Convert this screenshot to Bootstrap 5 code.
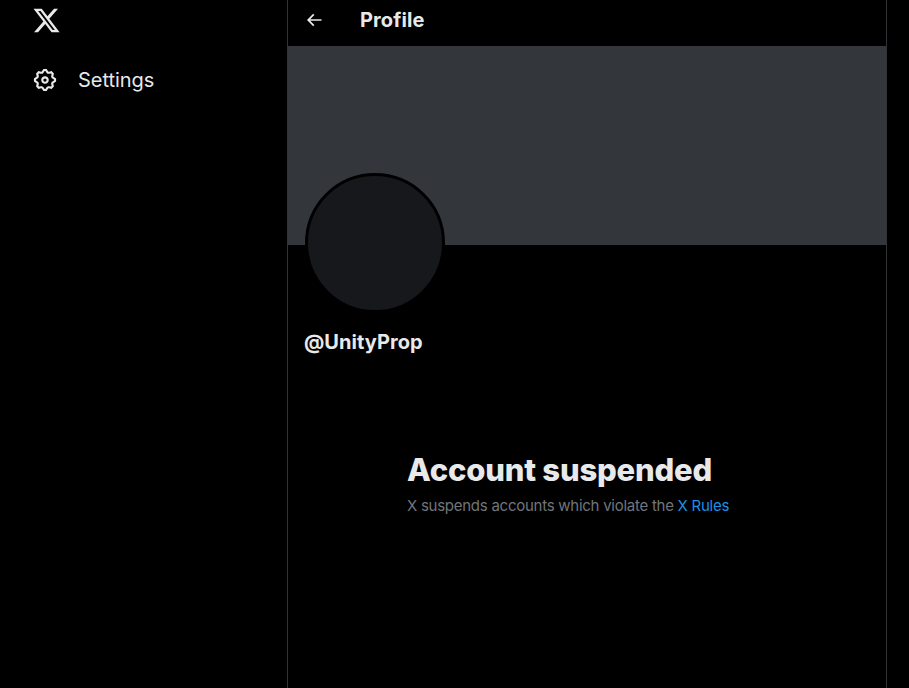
<!DOCTYPE html>
<html lang="en">
<head>
<meta charset="utf-8">
<title>Profile</title>
<link rel="stylesheet" href="https://cdn.jsdelivr.net/npm/bootstrap@5.3.0/dist/css/bootstrap.min.css">
<style>
html,body{height:100%;}
body{background:#000;color:#e7e9ea;font-family:"Inter","Liberation Sans",sans-serif;overflow:hidden;}
.shell{height:688px;}
.side{width:287px;flex:none;padding-left:32px;}
.logo-wrap{height:41px;padding-top:6px;}
.logo-svg{width:29px;height:29px;display:block;fill:#e7e9ea;}
.set-row{height:78px;gap:20px;}
.gear-svg{width:26px;height:26px;fill:#e7e9ea;}
.set-text{font-size:20px;line-height:24px;color:#e7e9ea;letter-spacing:-.05px;}
.main-col{width:600px;flex:none;border-left:1px solid #2f3336;border-right:1px solid #2f3336;}
.top-bar{height:46px;padding-left:16px;padding-bottom:6px;}
.back-svg{width:20px;height:20px;fill:#e7e9ea;}
.top-title{font-size:20px;font-weight:700;margin-left:36px;line-height:24px;letter-spacing:.1px;}
.banner{height:199px;background:#33363b;}
.prof-body{padding-left:17px;}
.avatar-disc{width:140px;height:140px;border-radius:50%;background:#16181c;border:3px solid #000;margin-top:-72px;}
.handle{font-size:20px;font-weight:700;line-height:24px;margin-top:17px;letter-spacing:.05px;margin-left:-1px;}
.susp{margin-top:98px;padding-left:119px;}
.susp-title{font-size:31px;font-weight:800;line-height:36px;margin:0;letter-spacing:-.2px;}
.susp-text{font-size:15px;line-height:20px;color:#71767b;margin:8px 0 0;letter-spacing:-.26px;}
.susp-text a{color:#1d8fe8;text-decoration:none;}
</style>
</head>
<body>
<div class="d-flex shell">
  <nav class="side d-flex flex-column">
    <div class="logo-wrap">
      <svg class="logo-svg" viewBox="0 0 24 24" aria-label="X"><path d="M18.244 2.25h3.308l-7.227 8.26 8.502 11.24H16.17l-5.214-6.817L4.99 21.75H1.68l7.73-8.835L1.254 2.25H8.08l4.713 6.231zm-1.161 17.52h1.833L7.084 4.126H5.117z"/></svg>
    </div>
    <div class="set-row d-flex align-items-center">
      <svg class="gear-svg" viewBox="0 0 24 24"><path d="M10.54 1.75h2.92l1.57 2.36c.11.17.32.25.53.21l2.53-.59 2.17 2.17-.58 2.54c-.05.2.04.41.21.53l2.36 1.57v2.92l-2.36 1.57c-.17.12-.26.33-.21.53l.58 2.54-2.17 2.17-2.53-.59c-.21-.04-.42.04-.53.21l-1.57 2.36h-2.92l-1.58-2.36c-.11-.17-.32-.25-.52-.21l-2.54.59-2.17-2.17.58-2.54c.05-.2-.03-.41-.21-.53l-2.35-1.57v-2.92L4.1 8.97c.18-.12.26-.33.21-.53L3.73 5.9 5.9 3.73l2.54.59c.2.04.41-.04.52-.21l1.58-2.36zm1.07 2l-.98 1.47C10.05 6.08 9 6.5 7.99 6.27l-1.46-.34-.6.6.33 1.46c.24 1.01-.18 2.07-1.05 2.64l-1.46.98v.78l1.46.98c.87.57 1.29 1.63 1.05 2.64l-.33 1.46.6.6 1.46-.34c1.01-.23 2.06.19 2.64 1.05l.98 1.47h.78l.97-1.47c.58-.86 1.63-1.28 2.65-1.05l1.45.34.61-.6-.34-1.46c-.23-1.01.18-2.07 1.05-2.64l1.47-.98v-.78l-1.47-.98c-.87-.57-1.28-1.63-1.05-2.64l.34-1.46-.61-.6-1.45.34c-1.02.23-2.07-.19-2.65-1.05l-.97-1.47h-.78zM12 10.5c-.83 0-1.5.67-1.5 1.5s.67 1.5 1.5 1.5c.82 0 1.5-.67 1.5-1.5s-.68-1.5-1.5-1.5zM8.5 12c0-1.93 1.56-3.5 3.5-3.5 1.93 0 3.5 1.57 3.5 3.5s-1.57 3.5-3.5 3.5c-1.94 0-3.5-1.57-3.5-3.5z"/></svg>
      <span class="set-text">Settings</span>
    </div>
  </nav>
  <main class="main-col d-flex flex-column">
    <header class="top-bar d-flex align-items-center">
      <svg class="back-svg" viewBox="0 0 24 24"><path d="M7.414 13l5.043 5.04-1.414 1.42L3.586 12l7.457-7.46 1.414 1.42L7.414 11H21v2H7.414z"/></svg>
      <span class="top-title">Profile</span>
    </header>
    <div class="banner"></div>
    <div class="prof-body">
      <div class="avatar-disc"></div>
      <div class="handle">@UnityProp</div>
    </div>
    <section class="susp">
      <h1 class="susp-title">Account suspended</h1>
      <p class="susp-text">X suspends accounts which violate the <a href="#">X Rules</a></p>
    </section>
  </main>
</div>
<script src="https://cdn.jsdelivr.net/npm/bootstrap@5.3.0/dist/js/bootstrap.bundle.min.js"></script>
</body>
</html>
